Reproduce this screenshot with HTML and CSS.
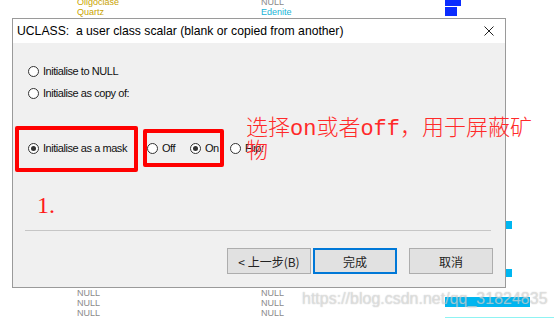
FILE: index.html
```html
<!DOCTYPE html>
<html lang="zh-CN">
<head>
  <meta charset="UTF-8">
  <title>UCLASS</title>
  <link rel="stylesheet" href="styles.css">
</head>
<body>

  <div class="sheet">
    <div class="row row-first">
      <span class="gold">Oligoclase</span><span class="grey">NULL</span><span><i class="bar blue bar-16"></i></span>
    </div>
    <div class="row">
      <span class="gold">Quartz</span><span class="cyan-text">Edenite</span><span><i class="bar blue bar-12"></i></span>
    </div>
    <div class="gap gap-a"></div>
    <div class="row">
      <span></span><span></span><span><i class="bar cyan bar-67"></i></span>
    </div>
    <div class="gap gap-b"></div>
    <div class="row">
      <span></span><span></span><span><i class="bar cyan bar-67"></i></span>
    </div>
    <div class="gap gap-c"></div>
    <div class="row">
      <span class="grey">NULL</span><span class="grey">NULL</span><span></span>
    </div>
    <div class="row">
      <span class="grey">NULL</span><span class="grey">NULL</span><span><i class="bar cyan bar-85 lift"></i></span>
    </div>
    <div class="row">
      <span class="grey">NULL</span><span class="grey">NULL</span><span></span>
    </div>
    <div class="row">
      <span></span><span></span><span><i class="bar pale lift"></i></span>
    </div>
  </div>

  <div class="window">
    <div class="titlebar">
      <span class="title">UCLASS:  a user class scalar (blank or copied from another)</span>
      <svg class="close" width="10" height="10" viewBox="0 0 10 10">
        <path d="M0.5 0.5 L9.5 9.5 M9.5 0.5 L0.5 9.5" stroke="#222" stroke-width="1" fill="none"/>
      </svg>
    </div>

    <div class="body">
      <div class="choices">
        <label class="opt"><span class="radio"></span>Initialise to NULL</label>
        <label class="opt opt-second"><span class="radio"></span>Initialise as copy of:</label>
        <div class="mask-row">
          <label class="opt opt-mask"><span class="radio on"></span>Initialise as a mask</label>
          <label class="opt opt-off"><span class="radio"></span>Off</label>
          <label class="opt opt-on"><span class="radio on"></span>On</label>
          <label class="opt"><span class="radio"></span>Flip:</label>
        </div>
      </div>

      <div class="rule"></div>

      <div class="buttons">
        <button class="btn">&lt; 上一步(B)</button>
        <button class="btn btn-default">完成</button>
        <button class="btn btn-cancel">取消</button>
      </div>
    </div>
  </div>

  <!-- red marks drawn over the screenshot -->
  <div class="mark mark-mask"></div>
  <div class="mark mark-toggle"></div>
  <div class="note-num">1.</div>
  <div class="note-text">选择on或者off，用于屏蔽矿物</div>

  <div class="watermark">https://blog.csdn.net/qq_31824835</div>

</body>
</html>
```

FILE: styles.css
```css
body {
  margin: 0;
  width: 554px;
  height: 318px;
  overflow: hidden;
  background-color: #ffffff;
  position: relative;
  font-family: "Liberation Sans", Arial, sans-serif;
}

/* background table behind the dialog */
.sheet {
  font-size: 9px;
  line-height: 10px;
}

.row {
  display: grid;
  grid-template-columns: 184px 184px 1fr;
  padding-left: 77px;
  height: 10px;
}

.row-first {
  margin-top: -3px;
}

.gap-a { height: 203px; }
.gap-b { height: 38px; }
.gap-c { height: 10px; }

.gold { color: #c9a300; }
.grey { color: #8a8a8a; }
.cyan-text { color: #19b3d6; }

.bar {
  display: block;
  height: 9px;
}

.bar.lift { margin-top: -1px; height: 10px; }

.blue { background-color: #0a2cff; }
.cyan { background-color: #00b6f0; height: 8px; margin-top: 1px; }
.pale { background-color: #8ff3f3; width: 110px; }

.bar-16 { width: 16px; }
.bar-12 { width: 12px; }
.bar-67 { width: 67px; }
.bar-85 { width: 85px; }

/* dialog window */
.window {
  position: absolute;
  left: 12px;
  top: 18px;
  width: 494px;
  height: 270px;
  box-sizing: border-box;
  border: 1px solid #9a9a9a;
  background-color: #f0f0f0;
  display: flex;
  flex-direction: column;
}

.titlebar {
  height: 24px;
  background-color: #fff;
  display: flex;
  align-items: center;
  justify-content: space-between;
  padding: 0 11px 0 4px;
}

.title {
  font-size: 12.2px;
  color: #000;
  white-space: pre;
}

.close {
  display: block;
}

.body {
  flex: 1;
  display: flex;
  flex-direction: column;
}

.choices {
  padding: 20px 0 0 15px;
  font-size: 11px;
  letter-spacing: -0.45px;
  color: #111;
}

.opt {
  display: flex;
  align-items: center;
  gap: 4px;
  height: 16px;
}

.opt-second {
  margin-top: 6px;
}

.mask-row {
  display: flex;
  margin-top: 39px;
}

.opt-mask { width: 119px; }
.opt-off { width: 43px; }
.opt-on { width: 40px; }

.radio {
  width: 11px;
  height: 11px;
  box-sizing: border-box;
  border: 1px solid #333;
  border-radius: 50%;
  background-color: #fff;
  display: flex;
  align-items: center;
  justify-content: center;
  flex: none;
}

.radio.on::after {
  content: "";
  width: 5px;
  height: 5px;
  border-radius: 50%;
  background-color: #333;
}

.rule {
  margin: 74px 14px 0 12px;
  border-top: 1px solid #c6c6c6;
}

.buttons {
  display: flex;
  justify-content: flex-end;
  margin: 17px 12px 0 0;
}

.btn {
  width: 84px;
  height: 26px;
  box-sizing: border-box;
  border: 1px solid #adadad;
  background-color: #e1e1e1;
  font-family: "Noto Sans CJK SC", sans-serif;
  font-size: 12px;
  color: #222;
  padding: 0;
  display: flex;
  align-items: center;
  justify-content: center;
}

.btn-default {
  border: 2px solid #0078d7;
  margin-left: 2px;
}

.btn-cancel {
  margin-left: 12px;
}

/* red annotations */
.mark {
  position: absolute;
  box-sizing: border-box;
  border: 4px solid #ff0000;
  border-radius: 2px;
}

.mark-mask {
  left: 15px;
  top: 126px;
  width: 123px;
  height: 46px;
}

.mark-toggle {
  left: 143px;
  top: 129px;
  width: 81px;
  height: 38px;
}

.note-num {
  position: absolute;
  left: 37px;
  top: 193px;
  font-family: "Liberation Serif", serif;
  font-size: 24px;
  line-height: 24px;
  color: #ff1a1a;
}

.note-text {
  position: absolute;
  left: 246px;
  top: 118px;
  width: 290px;
  font-family: "Liberation Mono", "Noto Sans CJK SC", monospace;
  font-size: 22px;
  font-weight: 300;
  line-height: 23px;
  color: #ff2a2a;
}

.watermark {
  position: absolute;
  left: 302px;
  top: 291px;
  font-size: 16px;
  line-height: 16px;
  color: rgba(255, 255, 255, 0.5);
  text-shadow: 0 0 1px rgba(110, 110, 110, 0.55);
  white-space: nowrap;
}
```
